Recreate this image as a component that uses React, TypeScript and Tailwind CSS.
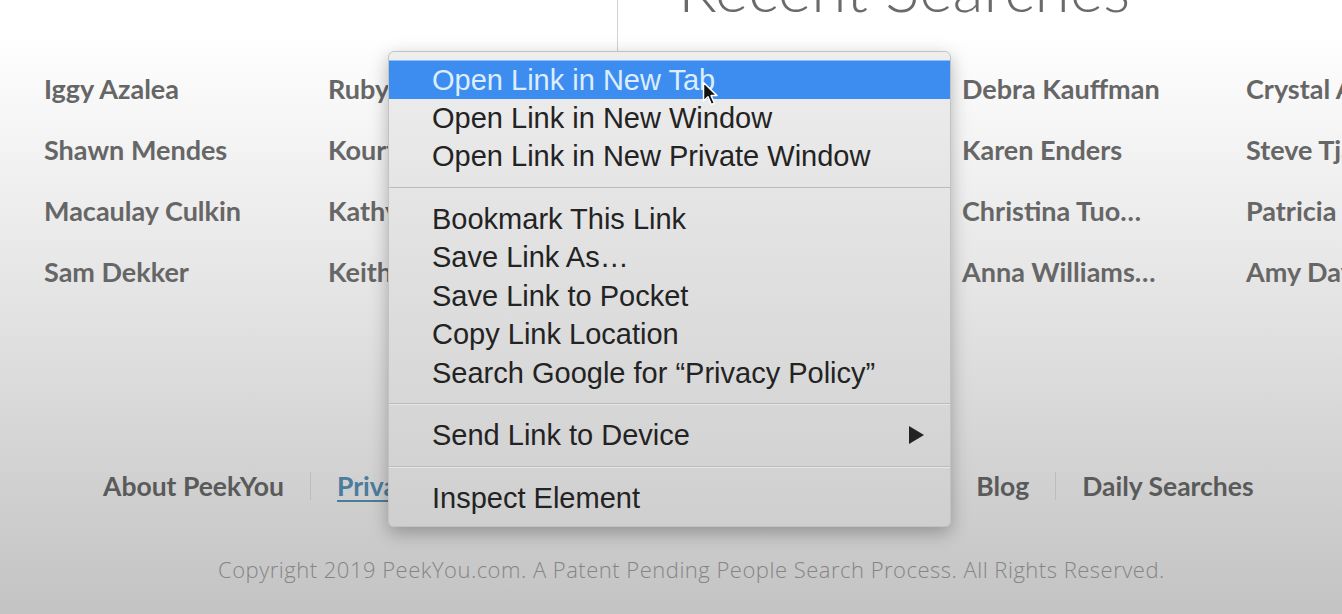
import React from "react";

const leftNames = [
  ["Iggy Azalea", "Ruby Rose"],
  ["Shawn Mendes", "Kourtney Kardashian"],
  ["Macaulay Culkin", "Kathy Griffin"],
  ["Sam Dekker", "Keith Urban"],
];

const recentNames = [
  ["John Baldwin", "Debra Kauffman", "Crystal Anderson"],
  ["Mary Jensen", "Karen Enders", "Steve Tjaden"],
  ["Linda Howard", "Christina Tuo…", "Patricia Moore"],
  ["David Brooks", "Anna Williams…", "Amy Davis"],
];

type MenuEntry = { label: string; sep?: false; active?: boolean; submenu?: boolean } | { sep: true };

const menu: MenuEntry[] = [
  { label: "Open Link in New Tab", active: true },
  { label: "Open Link in New Window" },
  { label: "Open Link in New Private Window" },
  { sep: true },
  { label: "Bookmark This Link" },
  { label: "Save Link As…" },
  { label: "Save Link to Pocket" },
  { label: "Copy Link Location" },
  { label: "Search Google for \u201CPrivacy Policy\u201D" },
  { sep: true },
  { label: "Send Link to Device", submenu: true },
  { sep: true },
  { label: "Inspect Element" },
];

const footerLinks = ["About PeekYou", "Privacy Policy", "Terms of service", "Contact us", "Blog", "Daily Searches"];

function Sep() {
  return <span className="w-px h-[28px] bg-[#bdbdbd] mx-[26px]" />;
}

function ContextMenu() {
  return (
    <div className="absolute left-[388px] top-[51px] w-[563px] pt-[8px] pb-[9px] rounded-[6px] border border-[#c2c2c2] bg-linear-to-b from-[#eeeeee] to-[#cfcfcf] shadow-[0_6px_18px_rgba(0,0,0,0.28)] font-['Liberation_Sans',Arial,sans-serif] text-[29px] text-[#232323]">
      {menu.map((m, i) =>
        m.sep ? (
          <div key={i} className="h-[24px] flex flex-col justify-center">
            <div className="h-px bg-[#bcbcbc]" />
            <div className="h-px bg-[#e6e6e6]" />
          </div>
        ) : (
          <div
            key={i}
            className={
              m.active
                ? "h-[38.5px] leading-[38.5px] pl-[43px] pr-[25px] flex items-center justify-between bg-[#3c8def] text-[#dcedff] border-t border-[#8cc0f7]"
                : "h-[38.5px] leading-[38.5px] pl-[43px] pr-[25px] flex items-center justify-between"
            }
          >
            <span className="whitespace-nowrap">{m.label}</span>
            {m.submenu && (
              <svg width="17" height="20" viewBox="0 0 17 20">
                <path d="M1 1 L16 10 L1 19 Z" fill="#232323" />
              </svg>
            )}
          </div>
        )
      )}
    </div>
  );
}

function Cursor() {
  return (
    <svg className="absolute left-[702px] top-[81px]" width="18" height="26" viewBox="0 0 18 26">
      <path
        d="M1.5 1.5 L1.5 20 L6 15.8 L9.3 23.5 L12.4 22.2 L9.1 14.6 L15 14.6 Z"
        fill="#111"
        stroke="#fff"
        strokeWidth="1.5"
        strokeLinejoin="round"
      />
    </svg>
  );
}

export default function App() {
  return (
    <div className="relative w-[1342px] h-[614px] overflow-hidden bg-linear-to-b from-white from-5% via-[#e3e3e3] via-50% to-[#c3c3c3] font-['Lato',sans-serif]">
      <div className="flex">
        <div className="w-[617px] shrink-0 pl-[44px] pt-[58px]">
          <div className="grid grid-cols-[284px_284px] auto-rows-[61px] text-[27px] font-bold text-[#666666] leading-[61px] whitespace-nowrap">
            {leftNames.flat().map((n) => (
              <span key={n}>{n}</span>
            ))}
          </div>
        </div>
        <div className="shrink-0 border-l border-[#d2d2d2] pl-[60px]">
          <h2 className="-mt-[44px] h-[64px] text-[64px] leading-[64px] font-light text-[#6a6a6a] whitespace-nowrap">
            Recent Searches
          </h2>
          <div className="mt-[38px] grid grid-cols-[284px_284px_284px] auto-rows-[61px] text-[27px] font-bold text-[#666666] leading-[61px] whitespace-nowrap">
            {recentNames.flat().map((n) => (
              <span key={n}>{n}</span>
            ))}
          </div>
        </div>
      </div>

      <nav className="mt-[164px] h-[40px] pl-[103px] flex items-center text-[26.5px] font-bold leading-[40px] text-[#5a5a5a] whitespace-nowrap">
        {footerLinks.map((l, i) => (
          <React.Fragment key={l}>
            {i > 0 && <Sep />}
            <span className={l === "Privacy Policy" ? "text-[#4a7c9c] underline underline-offset-4 decoration-2" : ""}>
              {l}
            </span>
          </React.Fragment>
        ))}
      </nav>

      <p className="mt-[48px] pl-[218px] text-[22px] leading-[30px] font-light tracking-[0.5px] text-[#858585] font-['Open_Sans',sans-serif] whitespace-nowrap">
        Copyright 2019 PeekYou.com. A Patent Pending People Search Process. All Rights Reserved.
      </p>

      <ContextMenu />
      <Cursor />
    </div>
  );
}
